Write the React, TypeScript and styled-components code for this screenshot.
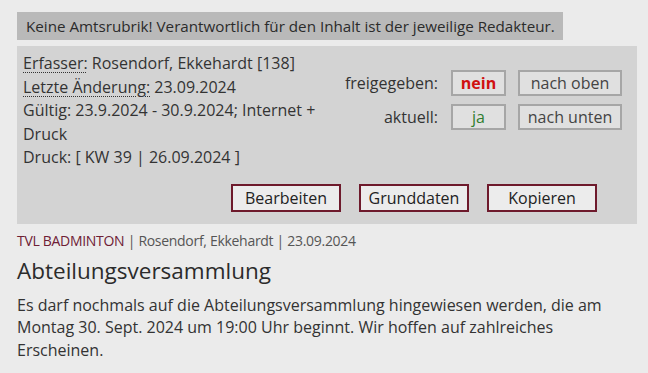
import React from "react";
import styled, { createGlobalStyle } from "styled-components";

const GlobalStyle = createGlobalStyle`
  html, body {
    margin: 0;
    padding: 0;
    background: #ebebeb;
  }
  body {
    font-family: "Open Sans", "Noto Sans", sans-serif;
    color: #333333;
  }
`;

const Page = styled.div`
  width: 620px;
  padding: 12px 11px 0 17px;
`;

const Notice = styled.div`
  width: 546px;
  height: 28px;
  box-sizing: border-box;
  background: #b9b9b9;
  font-size: 15.2px;
  line-height: 28px;
  padding-left: 9px;
  color: #2b2b2b;
  white-space: nowrap;
`;

const AdminBox = styled.div`
  margin-top: 6px;
  background: #d3d3d3;
  padding: 6px 15px 12px 6px;
`;

const AdminRow = styled.div`
  display: flex;
  align-items: flex-start;
`;

const InfoColumn = styled.div`
  flex: 0 0 310px;
  font-size: 16px;
  line-height: 23.5px;
  color: #333333;
`;

const Hint = styled.span`
  text-decoration: underline dotted;
  text-decoration-thickness: 1px;
  text-underline-offset: 3px;
`;

const StatusGrid = styled.div`
  margin-left: auto;
  margin-top: 18px;
  display: grid;
  grid-template-columns: auto 55px 104px;
  gap: 8px 12px;
  align-items: center;
`;

const StatusLabel = styled.span`
  text-align: right;
  font-size: 16px;
  padding-right: 1px;
  color: #333333;
`;

const StatusButton = styled.div<{ $tone?: "no" | "yes" }>`
  height: 26px;
  box-sizing: border-box;
  border: 2px solid #a6a6a6;
  background: #e0e0e0;
  text-align: center;
  font-size: 16px;
  line-height: 22px;
  color: ${p =>
    p.$tone === "no" ? "#d01010" : p.$tone === "yes" ? "#2f7d2f" : "#444444"};
  font-weight: ${p => (p.$tone === "no" ? 700 : 400)};
`;

const ActionBar = styled.div`
  display: flex;
  justify-content: flex-end;
  gap: 18px;
  margin-top: 14px;
  padding-right: 25px;
`;

const ActionButton = styled.div`
  width: 110px;
  height: 28px;
  box-sizing: border-box;
  border: 2px solid #6e1a2c;
  background: #ececec;
  text-align: center;
  font-size: 16px;
  line-height: 24px;
  color: #222222;
`;

const Article = styled.div`
  padding: 7px 0 0 0;
`;

const Meta = styled.div`
  font-size: 14px;
  line-height: 20px;
  letter-spacing: -0.3px;
  color: #555555;
`;

const Category = styled.span`
  color: #6e2035;
`;

const Title = styled.h2`
  margin: 6px 0 0 0;
  font-weight: 400;
  font-size: 22.5px;
  line-height: 28px;
  color: #2b2b2b;
`;

const Body = styled.p`
  margin: 9px 0 0 0;
  font-size: 16px;
  line-height: 22.5px;
  color: #333333;
`;

export default function App() {
  return (
    <>
      <GlobalStyle />
      <Page>
        <Notice>
          Keine Amtsrubrik! Verantwortlich für den Inhalt ist der jeweilige Redakteur.
        </Notice>
        <AdminBox>
          <AdminRow>
            <InfoColumn>
              <div>
                <Hint>Erfasser:</Hint> Rosendorf, Ekkehardt [138]
              </div>
              <div>
                <Hint>Letzte Änderung:</Hint> 23.09.2024
              </div>
              <div>Gültig: 23.9.2024 - 30.9.2024; Internet + Druck</div>
              <div>Druck: [ KW 39 | 26.09.2024 ]</div>
            </InfoColumn>
            <StatusGrid>
              <StatusLabel>freigegeben:</StatusLabel>
              <StatusButton $tone="no">nein</StatusButton>
              <StatusButton>nach oben</StatusButton>
              <StatusLabel>aktuell:</StatusLabel>
              <StatusButton $tone="yes">ja</StatusButton>
              <StatusButton>nach unten</StatusButton>
            </StatusGrid>
          </AdminRow>
          <ActionBar>
            <ActionButton>Bearbeiten</ActionButton>
            <ActionButton>Grunddaten</ActionButton>
            <ActionButton>Kopieren</ActionButton>
          </ActionBar>
        </AdminBox>
        <Article>
          <Meta>
            <Category>TVL BADMINTON</Category> | Rosendorf, Ekkehardt | 23.09.2024
          </Meta>
          <Title>Abteilungsversammlung</Title>
          <Body>
            Es darf nochmals auf die Abteilungsversammlung hingewiesen werden, die am
            Montag 30. Sept. 2024 um 19:00 Uhr beginnt. Wir hoffen auf zahlreiches
            Erscheinen.
          </Body>
        </Article>
      </Page>
    </>
  );
}
